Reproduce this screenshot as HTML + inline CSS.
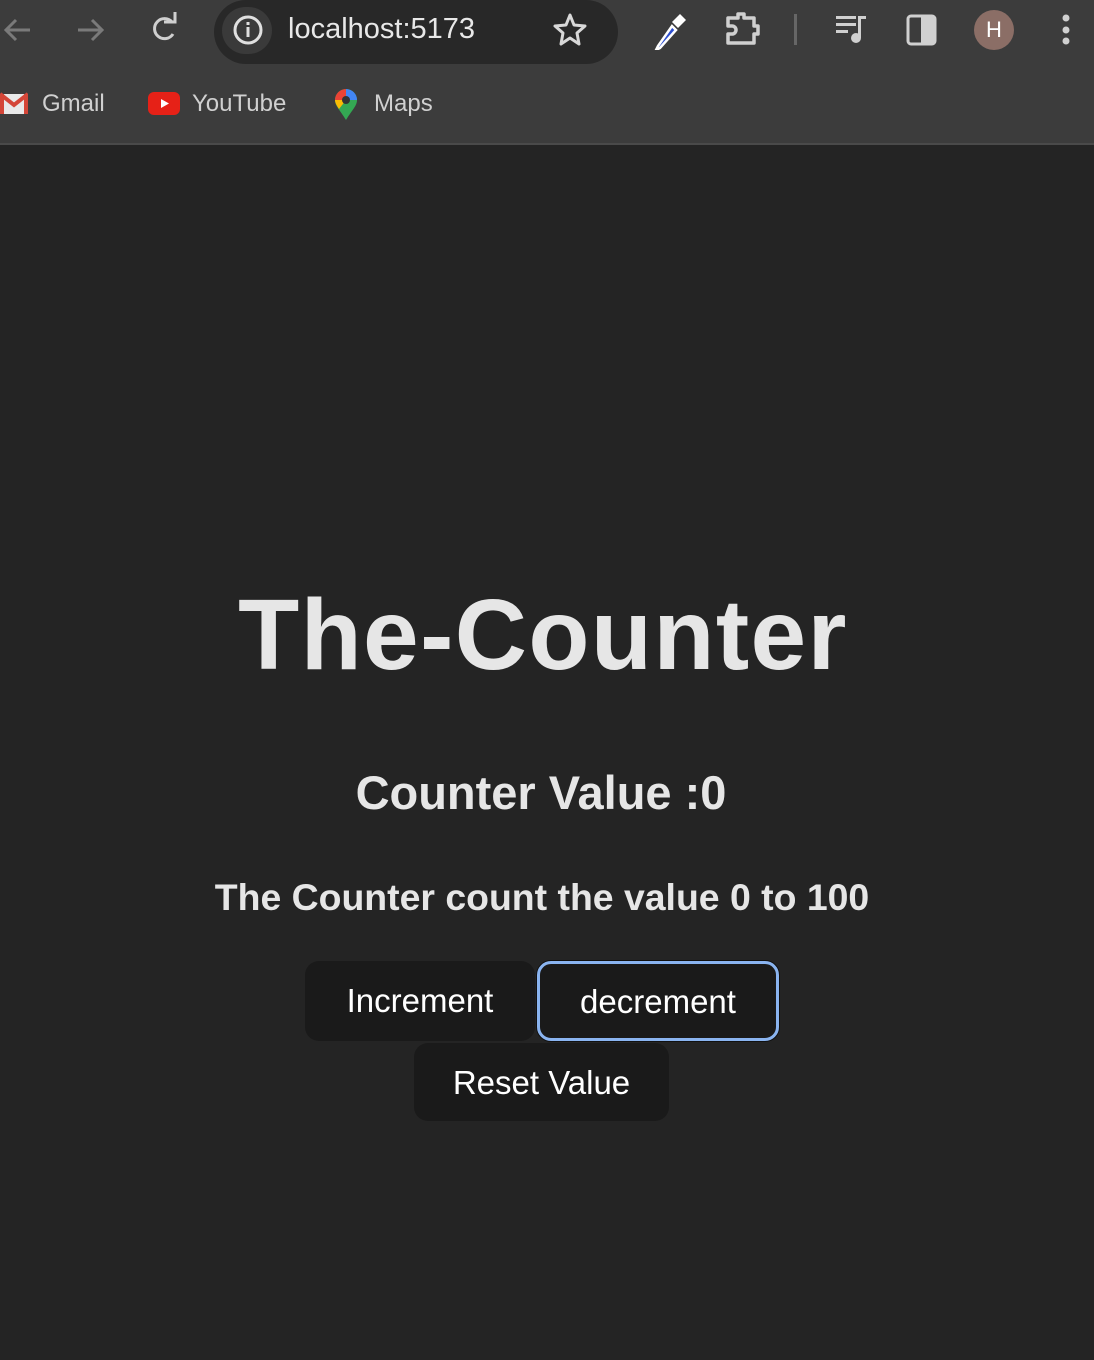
<!DOCTYPE html>
<html><head><meta charset="utf-8"><style>
*{margin:0;padding:0;box-sizing:border-box}
body{width:1094px;height:1360px;background:#242424;font-family:"Liberation Sans",sans-serif;overflow:hidden;position:relative;color:#e6e6e6}
.bar{position:absolute;left:0;top:0;width:1094px;height:145px;background:#3c3c3c;border-bottom:2px solid #4a4a4a}
.omni{position:absolute;left:214px;top:0;width:404px;height:64px;border-radius:32px;background:#282828}
.info{position:absolute;left:222px;top:7px;width:50px;height:47px;border-radius:24px;background:#3a3a3a}
.abs{position:absolute}
.bm{position:absolute;top:89px;font-size:24px;color:#d0d0d0}
h1{position:absolute;left:-4px;width:1094px;text-align:center;top:575px;font-size:100px;font-weight:bold;letter-spacing:1.4px;line-height:120px}
h2{position:absolute;left:-6px;width:1094px;text-align:center;top:765px;font-size:47px;font-weight:bold;line-height:56px}
p.s{position:absolute;left:-5px;width:1094px;text-align:center;top:874px;font-size:37.4px;font-weight:bold;line-height:46px}
.btn{position:absolute;background:#1a1a1a;border-radius:14px;color:#fff;font-size:33px;text-align:center;line-height:80px}
</style></head><body>
<div class="bar"></div>
<svg class="abs" style="left:0;top:0" width="200" height="60" viewBox="0 0 200 60">
<path d="M30 30H6M16 20L6 30L16 40" stroke="#7a7a7a" stroke-width="3" fill="none"/>
<path d="M78 30H102M92 20L102 30L92 40" stroke="#7a7a7a" stroke-width="3" fill="none"/>
<path d="M172 22A10 10 0 1 0 173 34" stroke="#cfcfcf" stroke-width="3" fill="none"/><path d="M164 22H175V12" stroke="#cfcfcf" stroke-width="3" fill="none"/>
</svg>
<div class="omni"></div><div class="info"></div>
<svg class="abs" style="left:230px;top:12px" width="36" height="36"><circle cx="18" cy="18" r="13" stroke="#e0e0e0" stroke-width="3" fill="none"/><rect x="16.5" y="15" width="3" height="10" fill="#e0e0e0"/><rect x="16.5" y="10" width="3" height="3" fill="#e0e0e0"/></svg>
<div class="abs" style="left:288px;top:13px;font-size:29px;color:#e8e8e8">localhost:5173</div>
<svg class="abs" style="left:552px;top:12px" width="36" height="36"><path d="M18 3L22 13L33 14L25 21L27 32L18 26L9 32L11 21L3 14L14 13Z" stroke="#d8d8d8" stroke-width="3" fill="none" stroke-linejoin="round"/></svg>
<svg class="abs" style="left:650px;top:10px" width="40" height="40"><path d="M8 36L6 40L10 38L26 20L22 16Z" fill="#2d4ecf" stroke="#fff" stroke-width="2.5"/><path d="M22 12L30 4L36 10L28 18Z" fill="#fff"/></svg>
<svg class="abs" style="left:724px;top:12px" width="40" height="36"><path d="M4 6H14V2H20V6H30V14H34V22H30V31H4V22H8A4 4 0 0 0 8 14H4Z" stroke="#d0d0d0" stroke-width="3.5" fill="none" stroke-linejoin="round"/></svg>
<div class="abs" style="left:794px;top:14px;width:3px;height:31px;background:#666"></div>
<svg class="abs" style="left:834px;top:14px" width="34" height="30"><rect x="2" y="2" width="20" height="3" fill="#d0d0d0"/><rect x="2" y="9" width="20" height="3" fill="#d0d0d0"/><rect x="2" y="16" width="12" height="3" fill="#d0d0d0"/><rect x="24" y="4" width="3" height="20" fill="#d0d0d0"/><rect x="24" y="2" width="8" height="3" fill="#d0d0d0"/><circle cx="22" cy="24" r="5" fill="#d0d0d0"/></svg>
<svg class="abs" style="left:906px;top:14px" width="32" height="32"><rect x="2" y="2" width="27" height="28" rx="3" stroke="#d0d0d0" stroke-width="3" fill="none"/><rect x="15" y="2" width="14" height="28" fill="#d0d0d0"/></svg>
<div class="abs" style="left:974px;top:10px;width:40px;height:40px;border-radius:50%;background:#8b6e66;color:#fff;font-size:22px;text-align:center;line-height:40px">H</div>
<svg class="abs" style="left:1060px;top:14px" width="12" height="32"><circle cx="6" cy="4" r="3.5" fill="#d0d0d0"/><circle cx="6" cy="16" r="3.5" fill="#d0d0d0"/><circle cx="6" cy="27" r="3.5" fill="#d0d0d0"/></svg>
<svg class="abs" style="left:0;top:92px" width="28" height="24"><rect x="0" y="2" width="28" height="20" fill="#e9e9e9"/><path d="M0 2L14 13L28 2" stroke="#d44638" stroke-width="4" fill="none"/><rect x="0" y="2" width="4" height="20" fill="#d44638"/><rect x="24" y="2" width="4" height="20" fill="#d44638"/></svg>
<div class="bm" style="left:42px;top:90px">Gmail</div>
<svg class="abs" style="left:148px;top:92px" width="32" height="24"><rect x="0" y="0" width="32" height="23" rx="6" fill="#e62117"/><path d="M13 7L21 11.5L13 16Z" fill="#fff"/></svg>
<div class="bm" style="left:192px;top:90px">YouTube</div>
<svg class="abs" style="left:334px;top:88px" width="24" height="34"><path d="M12 32C6 22 1 18 1 12A11 11 0 0 1 23 12C23 18 18 22 12 32Z" fill="#34a853"/><path d="M1 12A11 11 0 0 1 12 1L12 12Z" fill="#ea4335"/><path d="M12 1A11 11 0 0 1 23 12L12 12Z" fill="#4285f4"/><path d="M1 12L12 12L5 21C3 18 1 15 1 12Z" fill="#fbbc04"/><circle cx="12" cy="12" r="4" fill="#333"/></svg>
<div class="bm" style="left:374px;top:90px">Maps</div>

<h1>The-Counter</h1>
<h2>Counter Value :0</h2>
<p class="s">The Counter count the value 0 to 100</p>
<div class="btn" style="left:305px;top:961px;width:230px;height:80px">Increment</div>
<div class="btn" style="left:537px;top:961px;width:242px;height:80px;border:3px solid #8ab4f0;line-height:76px;box-shadow:0 0 0 1px #111">decrement</div>
<div class="btn" style="left:414px;top:1043px;width:255px;height:78px;line-height:80px">Reset Value</div>
</body></html>
